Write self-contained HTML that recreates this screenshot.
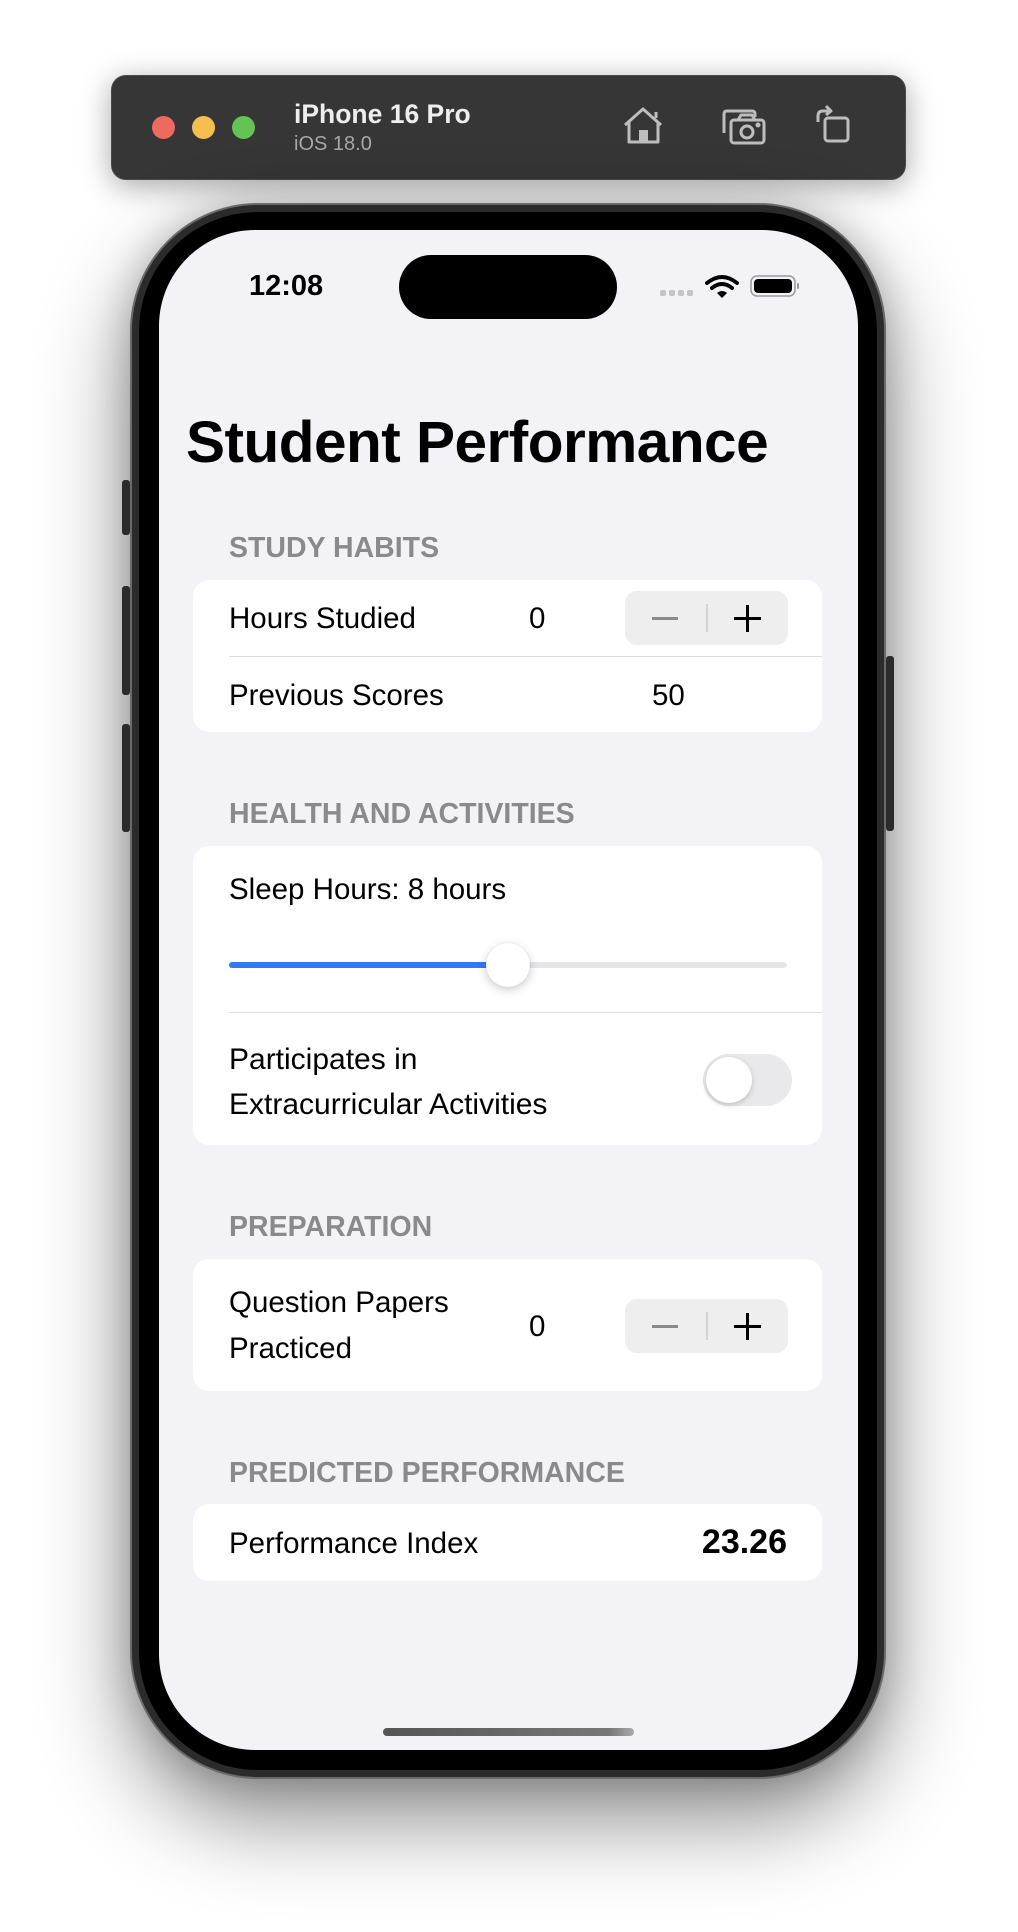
<!DOCTYPE html>
<html><head><meta charset="utf-8"><style>
*{margin:0;padding:0;box-sizing:border-box}
body{width:1018px;height:1932px;background:#fff;position:relative;overflow:hidden;font-family:"Liberation Sans",sans-serif}
.abs{position:absolute}
.toolbar{left:111px;top:75px;width:795px;height:105px;background:#363636;border-radius:15px;box-shadow:0 6px 30px rgba(0,0,0,.35);border:1px solid #4a4a4a}
.dot{width:23px;height:23px;border-radius:50%;top:116px}
.phone{left:130px;top:203px;width:756px;height:1576px;border-radius:128px;background:#2b2b2b;border:2px solid #6a6a6a;box-shadow:0 40px 90px rgba(0,0,0,.45),0 0 40px rgba(0,0,0,.2)}
.bezel{left:139px;top:212px;width:738px;height:1558px;border-radius:119px;background:#000}
.screen{left:159px;top:230px;width:699px;height:1520px;border-radius:96px;background:#f2f2f7;overflow:hidden}
.btn{background:#2b2b2b;border-radius:3px}
.t{color:#000;font-size:29.5px;white-space:nowrap}
.hdr{color:#8a8a8e;font-size:28.5px;font-weight:bold;left:70px;white-space:nowrap}
.card{left:34px;width:629px;background:#fff;border-radius:16px}
.sep{height:1px;background:#dcdce0;left:36px;right:0}
.step{width:163px;height:54px;background:#eeeeef;border-radius:12px}
.step:after{content:"";position:absolute;left:81px;top:13px;width:2px;height:28px;background:#d2d2d4}
</style></head><body>
<div class="abs toolbar"></div>
<div class="abs dot" style="left:152px;background:#ee6a5e"></div>
<div class="abs dot" style="left:192px;background:#f5bf4f"></div>
<div class="abs dot" style="left:232px;background:#61c454"></div>
<div class="abs" style="left:294px;top:99px;color:#eee;font-size:26.5px;font-weight:bold">iPhone 16 Pro</div>
<div class="abs" style="left:294px;top:133px;color:#a8a8a8;font-size:20px">iOS 18.0</div>
<svg class="abs" style="left:600px;top:90px" width="300" height="80" viewBox="0 0 300 80" fill="none" stroke="#bdbdbd" stroke-width="3" stroke-linejoin="round">
<path d="M25 35 L43 19 L61 35 M29 32 V52 H58 V32 M56 22 V28"/><rect x="39" y="40" width="9" height="12" fill="#bdbdbd" stroke="none"/>
<path d="M124 43 V24 Q124 21 127 21 H152 Q155 21 155 24 V27"/>
<rect x="131" y="30" width="33" height="23" rx="3"/><circle cx="147" cy="42" r="6"/><path d="M138 30 L141 25 H152 L155 30"/><circle cx="158" cy="35" r="1" fill="#bdbdbd"/>
<rect x="225" y="28" width="23" height="23" rx="3"/><path d="M218 32 V26 Q218 21 223 21 H230 M226 16 L231 21 L226 25"/>
</svg>
<div class="abs phone"></div>
<div class="abs btn" style="left:122px;top:480px;width:8px;height:55px"></div>
<div class="abs btn" style="left:122px;top:586px;width:8px;height:109px"></div>
<div class="abs btn" style="left:122px;top:724px;width:8px;height:108px"></div>
<div class="abs btn" style="left:886px;top:656px;width:8px;height:175px"></div>
<div class="abs bezel"></div>
<div class="abs screen">
 <div class="abs" style="left:90px;top:40px;font-size:29px;font-weight:bold">12:08</div>
 <div class="abs" style="left:240px;top:25px;width:218px;height:64px;border-radius:32px;background:#000"></div>
 <svg class="abs" style="left:500px;top:44px" width="160" height="26" viewBox="0 0 160 26">
  <g fill="#c4c4c8"><rect x="1" y="16" width="6" height="6" rx="2"/><rect x="10" y="16" width="6" height="6" rx="2"/><rect x="19" y="16" width="6" height="6" rx="2"/><rect x="28" y="16" width="6" height="6" rx="2"/></g>
  <path d="M48 9 Q63 -3 78 9" stroke="#000" stroke-width="4" fill="none" stroke-linecap="round"/>
  <path d="M53 14 Q63 6 73 14" stroke="#000" stroke-width="4" fill="none" stroke-linecap="round"/>
  <path d="M58 19 L63 24 L68 19 Q63 15 58 19Z" fill="#000"/>
  <rect x="92" y="2" width="44" height="20" rx="6" fill="none" stroke="#999" stroke-width="1.5"/>
  <rect x="95" y="5" width="38" height="14" rx="4" fill="#000"/>
  <rect x="138" y="9" width="2" height="6" rx="1" fill="#999"/>
 </svg>
 <div class="abs" style="left:27px;top:179px;font-size:58.5px;font-weight:bold;letter-spacing:-0.5px">Student Performance</div>

 <div class="abs hdr" style="top:302px">STUDY HABITS</div>
 <div class="abs card" style="top:350px;height:152px">
  <div class="abs t" style="left:36px;top:22px">Hours Studied</div>
  <div class="abs t" style="left:336px;top:22px">0</div>
  <div class="abs step" style="left:432px;top:11px"><div class="abs" style="left:27px;top:26px;width:26px;height:3px;background:#8a8a8e"></div><div class="abs" style="left:109px;top:26px;width:27px;height:3px;background:#000"></div><div class="abs" style="left:121px;top:14px;width:3px;height:27px;background:#000"></div></div>
  <div class="sep abs" style="top:76px"></div>
  <div class="abs t" style="left:36px;top:99px">Previous Scores</div>
  <div class="abs t" style="left:459px;top:99px">50</div>
 </div>

 <div class="abs hdr" style="top:568px">HEALTH AND ACTIVITIES</div>
 <div class="abs card" style="top:616px;height:299px">
  <div class="abs t" style="left:36px;top:27px">Sleep Hours: 8 hours</div>
  <div class="abs" style="left:36px;top:116px;width:558px;height:6px;border-radius:3px;background:#e5e5ea"></div>
  <div class="abs" style="left:36px;top:116px;width:280px;height:6px;border-radius:3px;background:#3478f6"></div>
  <div class="abs" style="left:293px;top:97px;width:44px;height:44px;border-radius:50%;background:#fff;box-shadow:0 3px 10px rgba(0,0,0,.2),0 0 1px rgba(0,0,0,.2)"></div>
  <div class="sep abs" style="top:166px"></div>
  <div class="abs t" style="left:36px;top:191px;line-height:45px;font-size:30px">Participates in<br>Extracurricular Activities</div>
  <div class="abs" style="left:510px;top:208px;width:89px;height:52px;border-radius:26px;background:#e9e9eb"></div>
  <div class="abs" style="left:513px;top:211px;width:46px;height:46px;border-radius:50%;background:#fff;box-shadow:0 2px 6px rgba(0,0,0,.18)"></div>
 </div>

 <div class="abs hdr" style="top:981px">PREPARATION</div>
 <div class="abs card" style="top:1029px;height:132px">
  <div class="abs t" style="left:36px;top:21px;line-height:46px">Question Papers<br>Practiced</div>
  <div class="abs t" style="left:336px;top:51px">0</div>
  <div class="abs step" style="left:432px;top:40px"><div class="abs" style="left:27px;top:26px;width:26px;height:3px;background:#8a8a8e"></div><div class="abs" style="left:109px;top:26px;width:27px;height:3px;background:#000"></div><div class="abs" style="left:121px;top:14px;width:3px;height:27px;background:#000"></div></div>
 </div>

 <div class="abs hdr" style="top:1227px">PREDICTED PERFORMANCE</div>
 <div class="abs card" style="top:1274px;height:77px">
  <div class="abs t" style="left:36px;top:23px">Performance Index</div>
  <div class="abs t" style="right:35px;top:19px;font-size:34px;font-weight:bold">23.26</div>
 </div>
 <div class="abs" style="left:224px;top:1498px;width:251px;height:8px;border-radius:4px;background:linear-gradient(90deg,#555,#777 90%,#aaa)"></div>
</div>
</body></html>
